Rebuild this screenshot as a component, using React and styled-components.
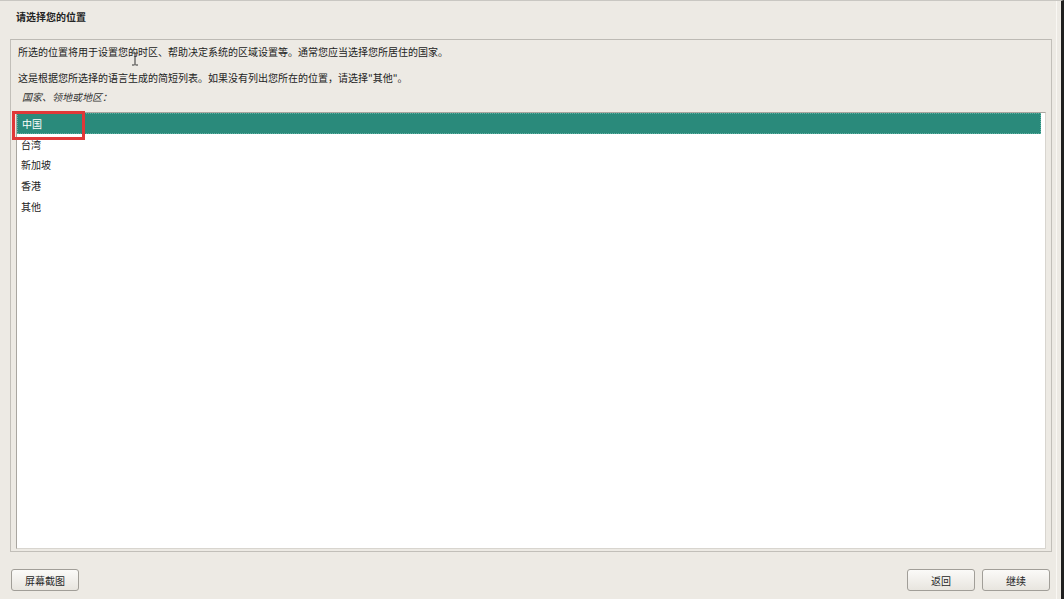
import React from "react";
import styled, { createGlobalStyle } from "styled-components";

const Global = createGlobalStyle`
  html, body { margin: 0; padding: 0; background: #edeae4; }
  body { font-family: "Noto Sans CJK SC", "Noto Sans", sans-serif; color: #232323; }
  * { box-sizing: border-box; }
`;

const Screen = styled.div`
  width: 1064px;
  height: 599px;
  display: flex;
  flex-direction: column;
  background: #edeae4;
  border-top: 1px solid #c9c7c2;
  border-right: 3px solid #1f1f1f;
  position: relative;
  overflow: hidden;
`;

const EdgeLine = styled.div`
  position: absolute;
  top: 0;
  bottom: 0;
  right: 4px;
  width: 1px;
  background: #f9f7f3;
`;

const Title = styled.h1`
  margin: 0;
  padding: 9px 0 0 16px;
  height: 38px;
  font-size: 10px;
  line-height: 14px;
  font-weight: 700;
`;

const Panel = styled.section`
  margin: 0 9px 0 10px;
  height: 513px;
  border: 1px solid #c2bfb9;
  border-top-color: #bdbab4;
  padding: 5px 5px 2px 5px;
  display: flex;
  flex-direction: column;
`;

const Para = styled.p`
  margin: 0;
  font-size: 10px;
  line-height: 14px;
  height: ${(p) => p.$h}px;
  font-style: ${(p) => (p.$italic ? "italic" : "normal")};
  padding-left: ${(p) => (p.$italic ? 6 : 2)}px;
  color: ${(p) => (p.$italic ? "#333" : "#232323")};
`;

const ListWrap = styled.div`
  position: relative;
  flex: 1;
  margin-top: 8px;
  background: #ffffff;
  border: 1px solid #a9a6a0;
  border-right-color: #d8d5cf;
  border-bottom-color: #d8d5cf;
`;

const Row = styled.div`
  height: 20.75px;
  display: flex;
  align-items: center;
  padding-left: 4px;
  font-size: 10px;
  color: ${(p) => (p.$selected ? "#ffffff" : "#232323")};
  background: ${(p) => (p.$selected ? "#2a8a7b" : "transparent")};
  border: ${(p) => (p.$selected ? "1px dotted #5fb2a4" : "none")};
  margin-right: ${(p) => (p.$selected ? 4 : 0)}px;
`;

const Highlight = styled.div`
  position: absolute;
  left: -5px;
  top: -2px;
  width: 73px;
  height: 29px;
  border: 3px solid #e03838;
  pointer-events: none;
`;

const Cursor = styled.svg`
  position: absolute;
  left: 131px;
  top: 51px;
`;

const Footer = styled.footer`
  flex: 1;
  display: flex;
  align-items: flex-start;
  padding: 17px 11px 0 11px;
  gap: 7px;
`;

const Spacer = styled.div`
  flex: 1;
`;

const Button = styled.button`
  width: 68px;
  height: 22px;
  border: 1px solid #a19e98;
  border-radius: 3px;
  background: linear-gradient(#fbfaf8, #e8e5df);
  font-family: "Noto Sans CJK SC", "Noto Sans", sans-serif;
  font-size: 10px;
  color: #262626;
  padding: 0;
`;

const rows = ["中国", "台湾", "新加坡", "香港", "其他"];

export default function App() {
  return (
    <>
      <Global />
      <Screen>
        <EdgeLine />
        <Title>请选择您的位置</Title>
        <Panel>
          <Para $h={26}>所选的位置将用于设置您的时区、帮助决定系统的区域设置等。通常您应当选择您所居住的国家。</Para>
          <Para $h={19}>这是根据您所选择的语言生成的简短列表。如果没有列出您所在的位置，请选择"其他"。</Para>
          <Para $h={14} $italic>国家、领地或地区：</Para>
          <ListWrap>
            {rows.map((r, i) => (
              <Row key={r} $selected={i === 0}>{r}</Row>
            ))}
            <Highlight />
          </ListWrap>
        </Panel>
        <Footer>
          <Button>屏幕截图</Button>
          <Spacer />
          <Button>返回</Button>
          <Button>继续</Button>
        </Footer>
        <Cursor width="8" height="14" viewBox="0 0 8 14">
          <path d="M1 1h2.5M4.5 1H7M4 1v12M1 13h2.5M4.5 13H7" stroke="#333" strokeWidth="1" fill="none" />
        </Cursor>
      </Screen>
    </>
  );
}
